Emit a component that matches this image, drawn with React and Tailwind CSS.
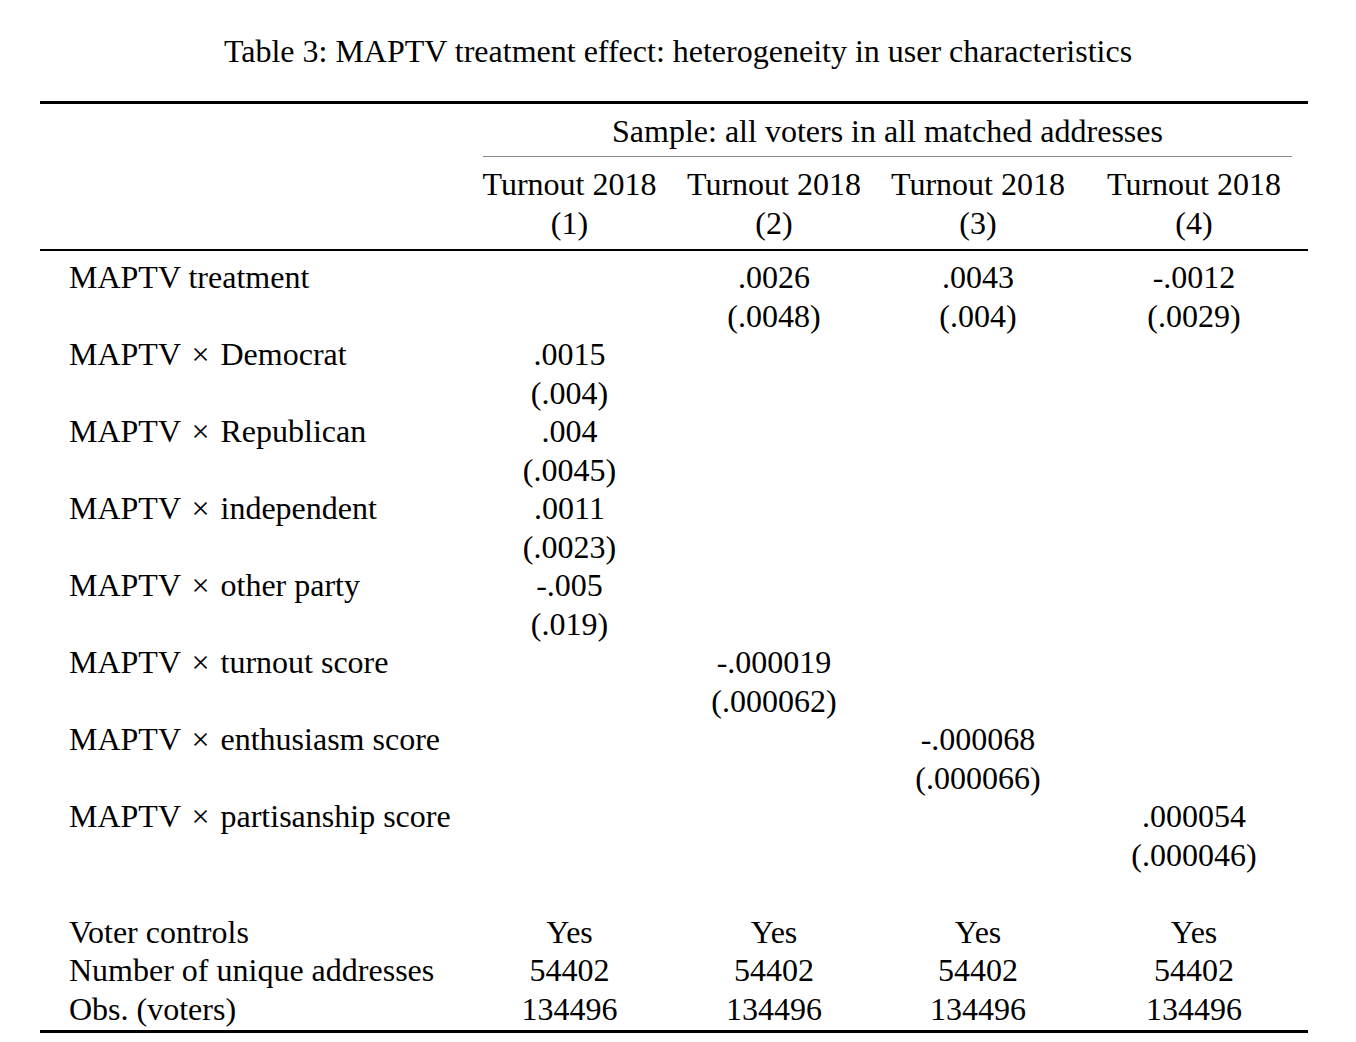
import React from 'react';

const cols = 'grid grid-cols-[427px_205px_204px_204px_228px]';

const rows = [
    { label: 'treatment', cells: [null, ['.0026', '(.0048)'], ['.0043', '(.004)'], ['-.0012', '(.0029)']] },
    { label: 'Democrat', times: true, cells: [['.0015', '(.004)'], null, null, null] },
    { label: 'Republican', times: true, cells: [['.004', '(.0045)'], null, null, null] },
    { label: 'independent', times: true, cells: [['.0011', '(.0023)'], null, null, null] },
    { label: 'other party', times: true, cells: [['-.005', '(.019)'], null, null, null] },
    { label: 'turnout score', times: true, cells: [null, ['-.000019', '(.000062)'], null, null] },
    { label: 'enthusiasm score', times: true, cells: [null, null, ['-.000068', '(.000066)'], null] },
    { label: 'partisanship score', times: true, cells: [null, null, null, ['.000054', '(.000046)']] },
];

const stats = [
    ['Voter controls', 'Yes'],
    ['Number of unique addresses', '54402'],
    ['Obs. (voters)', '134496'],
];

const App = () => {
    return (
        <div className="w-[1356px] h-[1042px] bg-white text-black font-['Liberation_Serif',serif] text-[32px] leading-[38.5px]">
            {/* Caption */}
            <div className="pt-[32px] text-center">
                Table 3: MAPTV treatment effect: heterogeneity in user characteristics
            </div>

            <div className="ml-[40px] w-[1268px] mt-[30px]">
                <div className="h-[3px] bg-black" />

                {/* Header */}
                <div className={`${cols} pt-[8px]`}>
                    <div />
                    <div className="col-span-4 px-[16px]">
                        <div className="text-center pb-[6px] border-b border-[#8a8a8a]">
                            Sample: all voters in all matched addresses
                        </div>
                    </div>
                </div>
                <div className={`${cols} pt-[8px] pb-[7px]`}>
                    <div />
                    {[1, 2, 3, 4].map((n) => (
                        <div key={n} className="text-center">
                            <div>Turnout 2018</div>
                            <div>({n})</div>
                        </div>
                    ))}
                </div>
                <div className="h-[2px] bg-black" />

                {/* Body */}
                <div className="pt-[7px]">
                    {rows.map((r) => (
                        <div key={r.label} className={cols}>
                            <div className="pl-[29px] whitespace-nowrap">
                                MAPTV {r.times && <><span className="mx-[3px]">×</span> </>}{r.label}
                            </div>
                            {r.cells.map((c, i) => (
                                <div key={i} className="text-center">
                                    {c ? (
                                        <>
                                            <div>{c[0]}</div>
                                            <div>{c[1]}</div>
                                        </>
                                    ) : (
                                        <div>&nbsp;</div>
                                    )}
                                </div>
                            ))}
                        </div>
                    ))}
                    <div className="h-[38.5px]" />
                    {stats.map(([label, v]) => (
                        <div key={label} className={cols}>
                            <div className="pl-[29px] whitespace-nowrap">{label}</div>
                            {[0, 1, 2, 3].map((i) => (
                                <div key={i} className="text-center">{v}</div>
                            ))}
                        </div>
                    ))}
                </div>
                <div className="mt-[2px] h-[3px] bg-black" />
            </div>
        </div>
    );
};

export default App;
